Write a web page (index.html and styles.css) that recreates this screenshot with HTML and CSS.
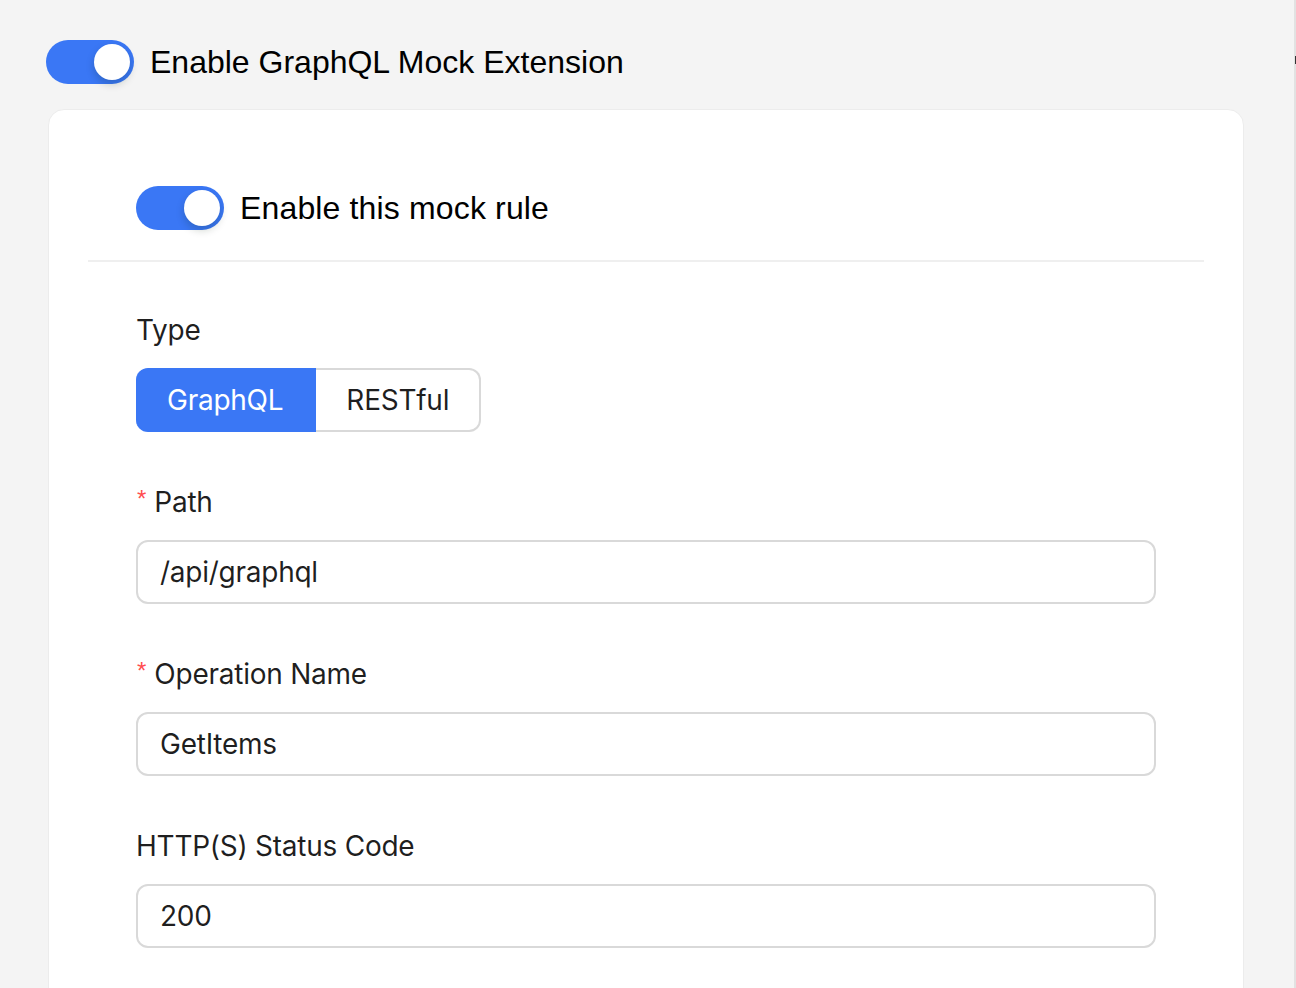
FILE: index.html
```html
<!DOCTYPE html>
<html>
<head>
<meta charset="utf-8">
<link rel="stylesheet" href="styles.css">
</head>
<body>
<div class="page">
  <main class="main">
    <div class="header">
      <span class="switch on"><span class="knob"></span></span>
      <span class="switch-text">Enable GraphQL Mock Extension</span>
    </div>
    <section class="card">
      <div class="rule-head">
        <span class="switch on"><span class="knob"></span></span>
        <span class="switch-text rule-text">Enable this mock rule</span>
      </div>
      <div class="divider"></div>
      <form class="form">
        <div class="item">
          <div class="label">Type</div>
          <div class="segmented">
            <span class="seg active">GraphQL</span>
            <span class="seg">RESTful</span>
          </div>
        </div>
        <div class="item">
          <div class="label"><span class="req">*</span>Path</div>
          <div class="input">/api/graphql</div>
        </div>
        <div class="item">
          <div class="label"><span class="req">*</span>Operation Name</div>
          <div class="input">GetItems</div>
        </div>
        <div class="item">
          <div class="label">HTTP(S) Status Code</div>
          <div class="input">200</div>
        </div>
      </form>
    </section>
  </main>
  <div class="edge"><span class="edge-mark"></span></div>
</div>
</body>
</html>
```

FILE: styles.css
```css
html, body {
  margin: 0;
  padding: 0;
  height: 100%;
  overflow: hidden;
}
body {
  background: #f4f4f4;
  font-family: Inter, "Noto Sans", sans-serif;
  color: rgba(0, 0, 0, 0.88);
}
.page {
  display: flex;
  height: 988px;
}
.main {
  flex: 1;
  min-width: 0;
}
.edge {
  width: 2px;
  background: #e2e2e2;
  position: relative;
}
.edge-mark {
  position: absolute;
  left: 1px;
  top: 56px;
  width: 1px;
  height: 8px;
  background: #333;
}
.header {
  display: flex;
  align-items: center;
  gap: 16px;
  padding: 40px 0 0 46px;
  height: 44px;
}
.switch {
  display: inline-flex;
  align-items: center;
  justify-content: flex-end;
  width: 88px;
  height: 44px;
  border-radius: 22px;
  background: #3a77f5;
  padding: 0 4px;
  box-sizing: border-box;
  flex: none;
}
.knob {
  width: 36px;
  height: 36px;
  border-radius: 50%;
  background: #fff;
  box-shadow: 0 4px 8px rgba(0, 35, 11, 0.2);
}
.switch-text {
  font-family: "Liberation Sans", Arial, sans-serif;
  font-size: 32px;
  color: #000;
  line-height: 44px;
}
.rule-text {
  letter-spacing: 0.15px;
}
.card {
  margin: 25px 50px 0 48px;
  background: #fff;
  border: 1px solid #ececec;
  border-radius: 16px;
  padding: 76px 39px 0;
  min-height: 900px;
}
.rule-head {
  display: flex;
  align-items: center;
  gap: 16px;
  padding-left: 48px;
  height: 44px;
}
.divider {
  height: 2px;
  background: #efefef;
  margin-top: 30px;
}
.form {
  padding: 46px 48px 0;
}
.item {
  margin-bottom: 48px;
}
.label {
  font-size: 28px;
  line-height: 44px;
  margin-bottom: 16px;
  display: flex;
  align-items: center;
  letter-spacing: -0.25px;
}
.req {
  color: #ff4d4f;
  font-family: "Liberation Sans", Arial, sans-serif;
  font-size: 24px;
  margin-right: 8px;
  margin-left: 1px;
  position: relative;
  top: -3px;
  letter-spacing: 0;
}
.segmented {
  display: inline-flex;
  height: 64px;
}
.seg {
  display: flex;
  align-items: center;
  padding: 0 30px;
  font-size: 28px;
  letter-spacing: -0.25px;
  border: 2px solid #d9d9d9;
  border-left: none;
  background: #fff;
  color: rgba(0, 0, 0, 0.88);
  box-sizing: border-box;
}
.seg:first-child {
  border-radius: 12px 0 0 12px;
  padding: 0 31px;
}
.seg:last-child {
  border-radius: 0 12px 12px 0;
}
.seg.active {
  background: #3a77f5;
  border-color: #3a77f5;
  color: #fff;
}
.input {
  height: 64px;
  box-sizing: border-box;
  border: 2px solid #d9d9d9;
  border-radius: 12px;
  padding: 0 22px;
  display: flex;
  align-items: center;
  font-size: 28px;
  letter-spacing: -0.25px;
  color: rgba(0, 0, 0, 0.88);
  background: #fff;
}
```
